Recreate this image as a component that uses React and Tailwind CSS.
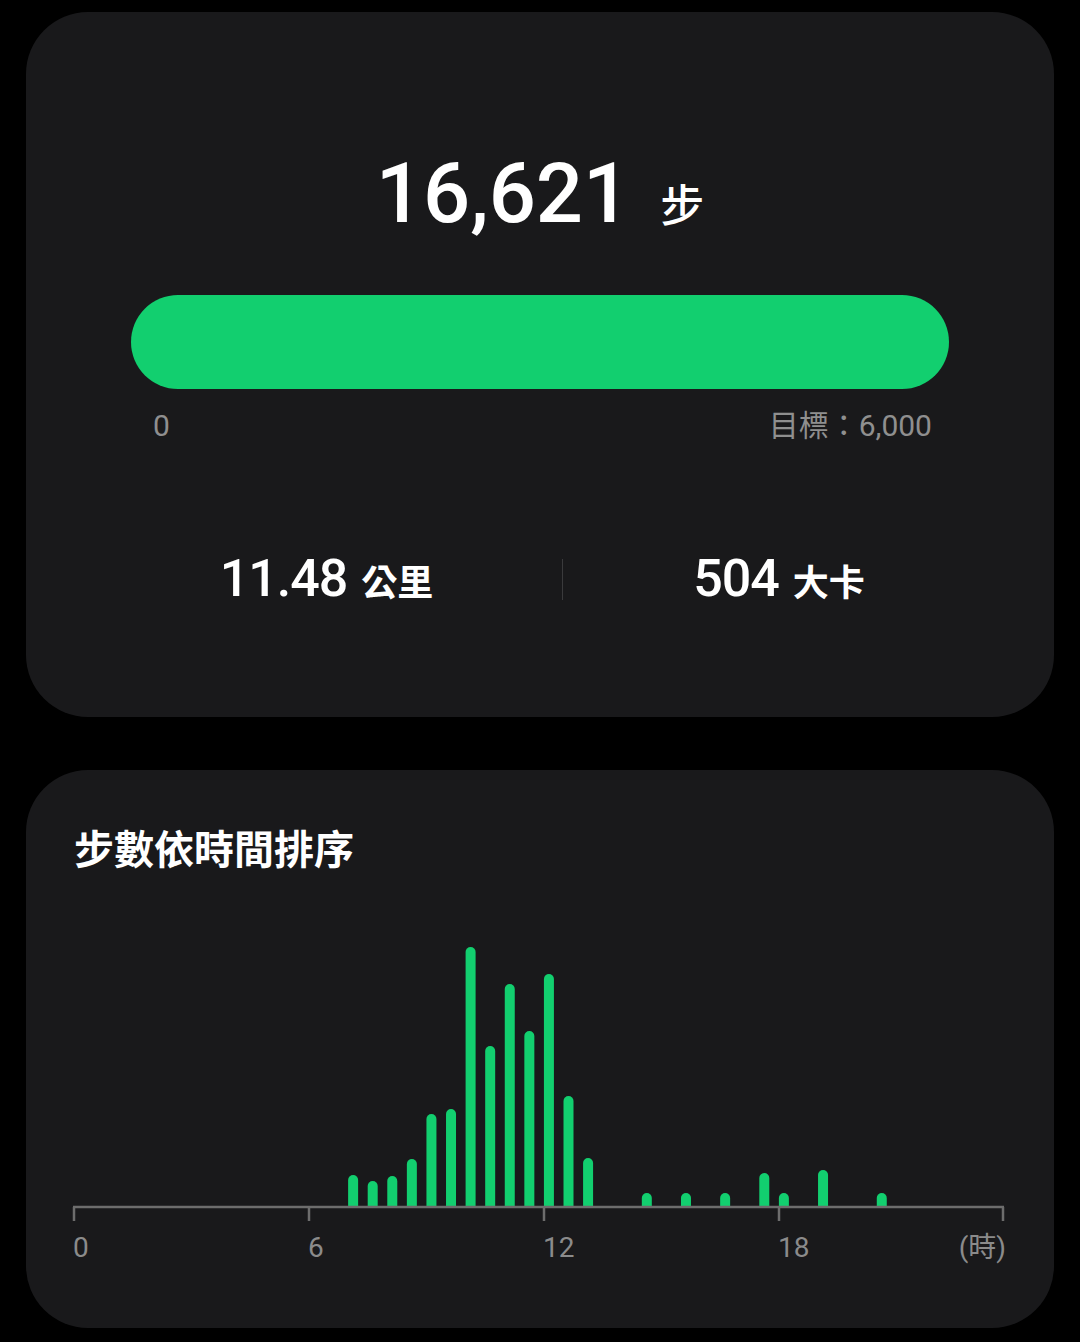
import React from "react";

const GREEN = "#12cf6f";

// half-hour bins -> bar height in px
const bins = {
  14: 32, 15: 26, 16: 31, 17: 48, 18: 93, 19: 98, 20: 260, 21: 161,
  22: 223, 23: 176, 24: 233, 25: 111, 26: 49, 29: 14, 31: 14, 33: 14,
  35: 34, 36: 14, 38: 37, 41: 14,
};

function StepChart() {
  const axisY = 277;
  const x0 = 2;
  const step = 19.58;
  const ticks = [
    { x: 2, label: "0" },
    { x: 237, label: "6" },
    { x: 472, label: "12" },
    { x: 707, label: "18" },
  ];

  return (
    <svg width="936" height="340" viewBox="0 0 936 340" className="block">
      {Object.entries(bins).map(([bin, h]) => {
        const x = x0 + Number(bin) * step;
        const top = axisY - h;
        return (
          <path
            key={bin}
            d={`M${x} ${axisY} V${top + 5} A5 5 0 0 1 ${x + 10} ${top + 5} V${axisY} Z`}
            fill={GREEN}
          />
        );
      })}
      <line x1="1" y1={axisY} x2="932" y2={axisY} stroke="#6d6d6d" strokeWidth="2.5" />
      {ticks.map((t) => (
        <line key={t.x} x1={t.x} y1={axisY} x2={t.x} y2={axisY + 14} stroke="#6d6d6d" strokeWidth="2.5" />
      ))}
      <line x1="931" y1={axisY} x2="931" y2={axisY + 14} stroke="#6d6d6d" strokeWidth="2.5" />
      {ticks.map((t) => (
        <text
          key={t.label}
          x={t.x - 1}
          y="327"
          fill="#8b8b8b"
          fontSize="28"
          fontFamily="Roboto, 'Noto Sans CJK TC', sans-serif"
        >
          {t.label}
        </text>
      ))}
      <text
        x="934"
        y="327"
        textAnchor="end"
        fill="#8b8b8b"
        fontSize="28"
        fontFamily="Roboto, 'Noto Sans CJK TC', sans-serif"
      >
        (時)
      </text>
    </svg>
  );
}

export default function App() {
  return (
    <div className="min-h-screen w-[1080px] bg-black pt-[12px] px-[26px] flex flex-col gap-[53px] font-[Roboto,'Noto_Sans_CJK_TC',sans-serif] text-white">
      {/* summary card */}
      <div className="bg-[#19191b] rounded-[62px] pt-[140px] pb-[112px] px-[105px] flex flex-col">
        <div className="flex items-baseline justify-center gap-[30px]">
          <span className="text-[83px] leading-none font-medium">16,621</span>
          <span className="text-[44px] leading-none font-medium">步</span>
        </div>
        <div className="mt-[60px] h-[94px] rounded-full bg-[#12cf6f]" />
        <div className="mt-[22px] flex justify-between pl-[22px] pr-[17px] text-[30px] leading-none text-[#8f8f8f]">
          <span>0</span>
          <span>目標：6,000</span>
        </div>
        <div className="mt-[112px] -mx-[105px] pl-[65px] flex items-center">
          <div className="w-[471px] flex items-baseline justify-center gap-[14px]">
            <span className="text-[52px] leading-none font-medium tracking-[-1px]">11.48</span>
            <span className="text-[36px] leading-none font-bold">公里</span>
          </div>
          <div className="w-px h-[41px] bg-[#3a3a3c]" />
          <div className="w-[432px] flex items-baseline justify-center gap-[14px]">
            <span className="text-[52px] leading-none font-medium tracking-[-1px]">504</span>
            <span className="text-[36px] leading-none font-bold">大卡</span>
          </div>
        </div>
      </div>

      {/* hourly chart card */}
      <div className="bg-[#19191b] rounded-[62px] pt-[61px] pb-[58px] pl-[48px] flex flex-col">
        <h2 className="text-[40px] leading-none font-bold">步數依時間排序</h2>
        <div className="mt-[59px] ml-[-2px]">
          <StepChart />
        </div>
      </div>
    </div>
  );
}
